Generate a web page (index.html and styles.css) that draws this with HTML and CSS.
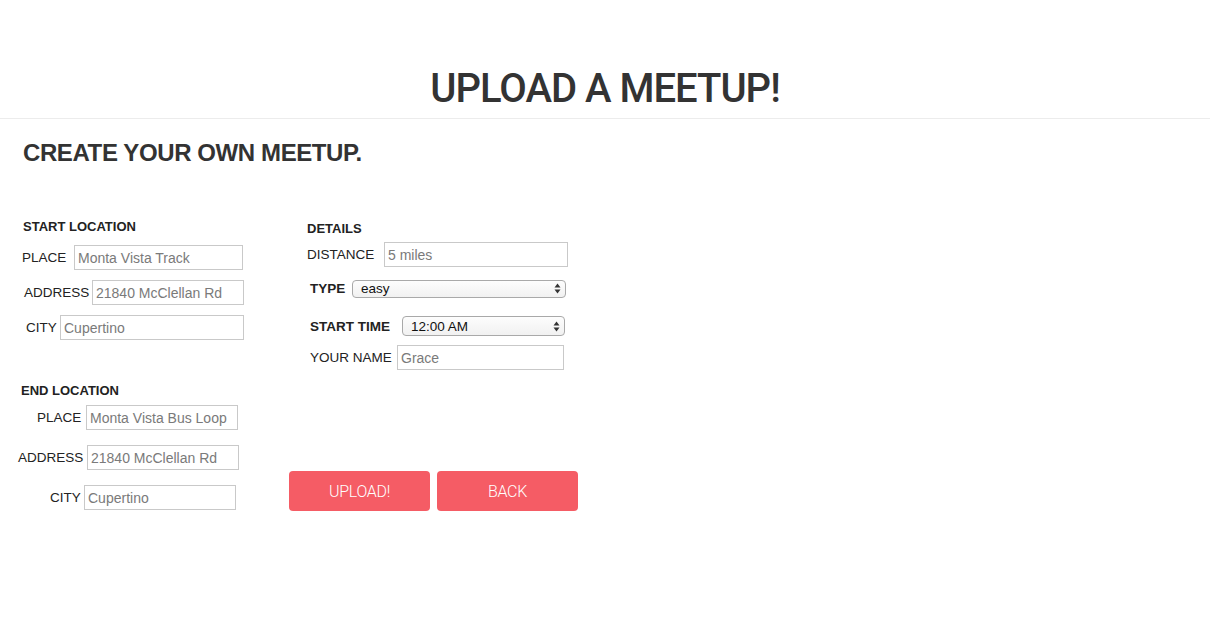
FILE: index.html
```html
<!DOCTYPE html>
<html lang="en">
<head>
<meta charset="utf-8">
<title>Upload a Meetup</title>
<link rel="stylesheet" href="styles.css">
</head>
<body>
<header class="top">
  <h1 class="title">UPLOAD A MEETUP!</h1>
</header>
<main class="page">
  <h2 class="subtitle">CREATE YOUR OWN MEETUP.</h2>
  <form class="form">
    <div class="col-loc">
      <div class="sec-title st-start">START LOCATION</div>
      <div class="row r-s-place"><label class="lbl">PLACE</label><input class="inp" placeholder="Monta Vista Track"></div>
      <div class="row r-s-addr"><label class="lbl">ADDRESS</label><input class="inp" placeholder="21840 McClellan Rd"></div>
      <div class="row r-s-city"><label class="lbl">CITY</label><input class="inp" placeholder="Cupertino"></div>

      <div class="sec-title st-end">END LOCATION</div>
      <div class="row r-e-place"><label class="lbl">PLACE</label><input class="inp" placeholder="Monta Vista Bus Loop"></div>
      <div class="row r-e-addr"><label class="lbl">ADDRESS</label><input class="inp" placeholder="21840 McClellan Rd"></div>
      <div class="row r-e-city"><label class="lbl">CITY</label><input class="inp" placeholder="Cupertino"></div>
    </div>
    <div class="col-details">
      <div class="sec-title st-details">DETAILS</div>
      <div class="row r-dist"><label class="lbl">DISTANCE</label><input class="inp" placeholder="5 miles"></div>
      <div class="row r-type"><label class="lbl bold">TYPE</label>
        <div class="sel-wrap">
          <select class="sel"><option>easy</option><option>moderate</option><option>hard</option></select>
          <svg class="sel-arrow" width="7" height="11" viewBox="0 0 7 11"><path d="M3.5 0.5 L6.5 4.5 L0.5 4.5 Z M3.5 10.5 L6.5 6.5 L0.5 6.5 Z" fill="#333"/></svg>
        </div>
      </div>
      <div class="row r-time"><label class="lbl bold">START TIME</label>
        <div class="sel-wrap">
          <select class="sel"><option>12:00 AM</option><option>1:00 AM</option></select>
          <svg class="sel-arrow" width="7" height="11" viewBox="0 0 7 11"><path d="M3.5 0.5 L6.5 4.5 L0.5 4.5 Z M3.5 10.5 L6.5 6.5 L0.5 6.5 Z" fill="#333"/></svg>
        </div>
      </div>
      <div class="row r-name"><label class="lbl">YOUR NAME</label><input class="inp" placeholder="Grace"></div>
      <div class="buttons">
        <button type="button" class="btn">UPLOAD!</button>
        <button type="button" class="btn">BACK</button>
      </div>
    </div>
  </form>
</main>
</body>
</html>
```
FILE: styles.css
```css
* { box-sizing: border-box; }
html, body { margin: 0; padding: 0; background: #fff; }
body {
  font-family: "Liberation Sans", Arial, sans-serif;
  color: #333;
}
.top {
  height: 119px;
  padding-top: 66px;
  border-bottom: 1px solid #ececec;
}
.title {
  margin: 0;
  text-align: center;
  font-family: Roboto, "Liberation Sans", sans-serif;
  font-weight: 500;
  font-size: 40px;
  line-height: 46px;
  letter-spacing: -1px;
  color: #333;
}
.page { padding: 0; }
.subtitle {
  margin: 20px 0 0 23px;
  font-family: "Liberation Sans", Arial, sans-serif;
  font-weight: bold;
  font-size: 24px;
  line-height: 28px;
  letter-spacing: -0.4px;
  color: #333;
}
.form {
  display: flex;
  margin: 0;
}
.col-loc {
  width: 289px;
  display: flex;
  flex-direction: column;
}
.col-details {
  display: flex;
  flex-direction: column;
}
.sec-title {
  font-size: 13px;
  font-weight: bold;
  line-height: 16px;
  height: 16px;
  color: #222;
}
.st-start { margin-top: 52px; padding-left: 23px; }
.st-end { margin-top: 43px; padding-left: 21px; }
.st-details { margin-top: 54px; padding-left: 18px; }

.row {
  display: flex;
  align-items: center;
  height: 25px;
}
.lbl {
  font-size: 13.5px;
  color: #222;
  white-space: nowrap;
  flex: none;
}
.lbl.bold { font-weight: bold; }
.inp {
  height: 25px;
  border: 1px solid #c9c9c9;
  border-radius: 0;
  padding: 0 3px;
  font-family: "Liberation Sans", Arial, sans-serif;
  font-size: 14px;
  color: #333;
  background: #fff;
  outline: none;
}
.inp::placeholder { color: #7a7a7a; opacity: 1; }

.r-s-place { margin-top: 10px; padding-left: 22px; }
.r-s-place .lbl { width: 52px; }
.r-s-place .inp { width: 169px; }
.r-s-addr { margin-top: 10px; padding-left: 24px; }
.r-s-addr .lbl { width: 68px; }
.r-s-addr .inp { width: 152px; }
.r-s-city { margin-top: 10px; padding-left: 26px; }
.r-s-city .lbl { width: 34px; }
.r-s-city .inp { width: 184px; }

.r-e-place { margin-top: 6px; padding-left: 37px; }
.r-e-place .lbl { width: 49px; }
.r-e-place .inp { width: 152px; }
.r-e-addr { margin-top: 15px; padding-left: 18px; }
.r-e-addr .lbl { width: 69px; }
.r-e-addr .inp { width: 152px; }
.r-e-city { margin-top: 15px; padding-left: 50px; }
.r-e-city .lbl { width: 34px; }
.r-e-city .inp { width: 152px; }

.r-dist { margin-top: 5px; padding-left: 18px; }
.r-dist .lbl { width: 77px; }
.r-dist .inp { width: 184px; }
.r-type { margin-top: 12px; padding-left: 21px; height: 18px; }
.r-type .lbl { width: 42px; }
.r-type .sel-wrap { width: 214px; height: 18px; }
.r-time { margin-top: 19px; padding-left: 21px; height: 20px; }
.r-time .lbl { width: 92px; }
.r-time .sel-wrap { width: 163px; height: 20px; }
.r-name { margin-top: 9px; padding-left: 21px; }
.r-name .lbl { width: 87px; }
.r-name .inp { width: 167px; }

.sel-wrap { position: relative; }
.sel {
  -webkit-appearance: none;
  appearance: none;
  width: 100%;
  height: 100%;
  margin: 0;
  border: 1px solid #a9a9a9;
  border-radius: 4px;
  background: linear-gradient(#fdfdfd, #f1f1f1);
  padding: 0 0 0 8px;
  font-family: "Liberation Sans", Arial, sans-serif;
  font-size: 13.5px;
  color: #111;
  outline: none;
}
.sel-arrow {
  position: absolute;
  right: 5px;
  top: 50%;
  margin-top: -5.5px;
  pointer-events: none;
}

.buttons {
  display: flex;
  gap: 7px;
  margin-top: 101px;
}
.btn {
  width: 141px;
  height: 40px;
  border: none;
  border-radius: 4px;
  background: #f55c65;
  color: #fff;
  font-family: Roboto, "Liberation Sans", sans-serif;
  font-weight: 300;
  font-size: 16px;
  letter-spacing: -0.3px;
  cursor: pointer;
}
```
